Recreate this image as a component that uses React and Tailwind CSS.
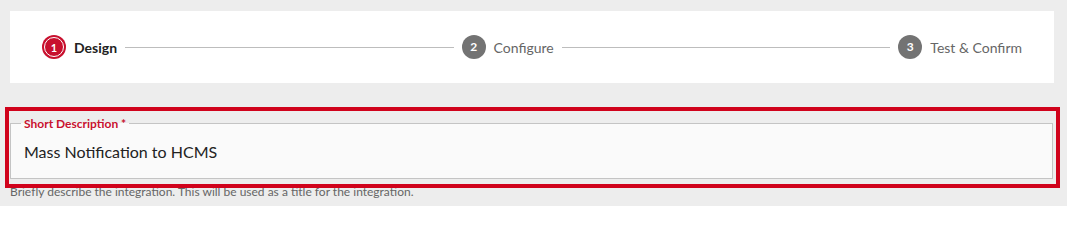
import React from 'react';

const steps = [
    { n: 1, label: 'Design', active: true },
    { n: 2, label: 'Configure' },
    { n: 3, label: 'Test & Confirm' },
];

const StepBadge = ({ n, active }) => active ? (
    <div className="w-6 h-6 rounded-full bg-[#c8102e] p-[2px] shrink-0">
        <div className="w-full h-full rounded-full border-[1.5px] border-white flex items-center justify-center text-white text-[11px] font-bold leading-none">{n}</div>
    </div>
) : (
    <div className="w-6 h-6 rounded-full bg-[#737373] flex items-center justify-center text-white text-[12px] font-bold leading-none shrink-0">{n}</div>
);

const App = () => {
    return (
        <div className="relative w-[1067px] h-[206px] bg-[#ededed] pt-[11px] overflow-hidden" style={{ fontFamily: 'Lato, "Open Sans", sans-serif' }}>
            <div className="ml-[10px] w-[1044px] h-[72px] bg-white flex items-center px-[32px]">
                {steps.map((s, i) => (
                    <React.Fragment key={s.n}>
                        <div className="flex items-center gap-[8px] shrink-0">
                            <StepBadge n={s.n} active={s.active} />
                            <span className={s.active ? 'text-[14px] font-bold text-[#222]' : 'text-[14px] text-[#666]'}>{s.label}</span>
                        </div>
                        {i < steps.length - 1 && <div className="flex-1 h-px bg-[#bdbdbd] mx-[8px]" />}
                    </React.Fragment>
                ))}
            </div>

            <div className="ml-[10px] w-[1043px] mt-[33px]">
                <fieldset className="border border-[#c4c4c4] bg-[#fafafa] px-[10px]">
                    <legend className="px-[3px] text-[12px] font-bold text-[#c8102e] leading-[15px]">Short Description *</legend>
                    <div className="pl-[3px] pt-[11px] pb-[16px] text-[16px] leading-[20px] text-[#222]">Mass Notification to HCMS</div>
                </fieldset>
                <p className="mt-[5px] text-[12px] leading-[16px] text-[#666]">Briefly describe the integration. This will be used as a title for the integration.</p>
            </div>

            <div className="absolute left-[5px] top-[107px] w-[1055px] h-[81px] border-4 border-[#d0021b] pointer-events-none" />
        </div>
    );
};

export default App;
